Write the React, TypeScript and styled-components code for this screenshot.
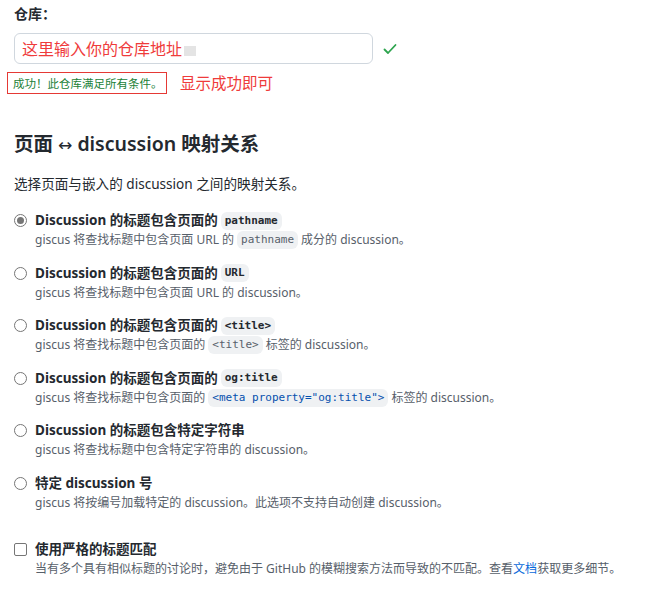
import React from "react";
import styled, { createGlobalStyle } from "styled-components";

const Global = createGlobalStyle`
  html, body { margin: 0; padding: 0; background: #fff; }
  body {
    font-family: "Noto Sans", "Noto Sans CJK SC", sans-serif;
    color: #24292f;
  }
  * { box-sizing: border-box; }
`;

const Page = styled.div`
  width: 651px;
  height: 593px;
  padding: 4px 14px 0 14px;
  overflow: hidden;
`;

const FieldLabel = styled.div`
  font-size: 14px;
  font-weight: 700;
  line-height: 20px;
  margin-bottom: 9px;
`;

const InputRow = styled.div`
  display: flex;
  align-items: center;
  gap: 10px;
`;

const InputBox = styled.div`
  width: 359px;
  height: 31px;
  border: 1px solid #d0d7de;
  border-radius: 6px;
  display: flex;
  align-items: center;
  padding-left: 7px;
`;

const Placeholder = styled.span`
  color: #ef3b3b;
  font-size: 16px;
  line-height: 20px;
`;

const Redact = styled.span`
  display: inline-block;
  width: 12px;
  height: 10px;
  background: #e4e4e4;
  margin-left: 2px;
  margin-top: 4px;
`;

const StatusRow = styled.div`
  display: flex;
  align-items: center;
  margin: 7px 0 0 -7px;
`;

const SuccessBox = styled.div`
  border: 1px solid #e53935;
  height: 22px;
  width: 160px;
  display: flex;
  align-items: center;
  padding-left: 5px;
  color: #1a7f37;
  font-size: 11.5px;
  white-space: nowrap;
  overflow: hidden;
`;

const Note = styled.span`
  color: #ef3b3b;
  font-size: 15.5px;
  margin-left: 13px;
`;

const Heading = styled.h2`
  margin: 36px 0 0 0;
  font-size: 19.5px;
  font-weight: 600;
  line-height: 28px;
`;

const Arrow = styled.span`
  font-weight: 400;
  font-family: "DejaVu Sans", sans-serif;
  font-size: 17px;
`;

const Intro = styled.p`
  margin: 16px 0 0 0;
  font-size: 13.6px;
  line-height: 18px;
`;

const OptionList = styled.div`
  display: flex;
  flex-direction: column;
  gap: 14.6px;
  margin-top: 18px;
`;

const Option = styled.label`
  display: grid;
  grid-template-columns: 21px 1fr;
  grid-template-rows: 19px 18px;
  row-gap: 1px;
`;

const Radio = styled.span<{ $checked?: boolean }>`
  width: 13px;
  height: 13px;
  border-radius: 50%;
  border: 1px solid #767676;
  margin-top: 3px;
  display: flex;
  align-items: center;
  justify-content: center;
  &::after {
    content: "";
    width: 7px;
    height: 7px;
    border-radius: 50%;
    background: ${(p) => (p.$checked ? "#767676" : "transparent")};
  }
`;

const Check = styled.span`
  width: 13px;
  height: 13px;
  border-radius: 2px;
  border: 1px solid #767676;
  margin-top: 3px;
`;

const Title = styled.div`
  font-size: 13.5px;
  font-weight: 700;
  line-height: 19px;
  display: flex;
  align-items: center;
  white-space: nowrap;
`;

const Desc = styled.div`
  grid-column: 2;
  font-size: 12px;
  line-height: 18px;
  height: 18px;
  color: #57606a;
  display: flex;
  align-items: center;
  white-space: nowrap;
`;

const Code = styled.code<{ $blue?: boolean }>`
  font-family: "DejaVu Sans Mono", "Liberation Mono", monospace;
  font-size: 11px;
  background: #eff1f3;
  border-radius: 6px;
  padding: 1px 4px;
  margin: 0 3px;
  color: ${(p) => (p.$blue ? "#0550ae" : "inherit")};
  line-height: 16px;
`;

const Link = styled.a`
  color: #0969da;
  text-decoration: none;
`;

const StrictBlock = styled.div`
  margin-top: 28px;
`;

export default function App() {
  return (
    <Page>
      <Global />
      <FieldLabel>仓库：</FieldLabel>
      <InputRow>
        <InputBox>
          <Placeholder>这里输入你的仓库地址</Placeholder>
          <Redact />
        </InputBox>
        <svg width="14" height="12" viewBox="0 0 14 12">
          <path d="M1.5 6.5 L5 10 L12.5 2" fill="none" stroke="#2da44e" strokeWidth="1.8" strokeLinecap="round" strokeLinejoin="round" />
        </svg>
      </InputRow>
      <StatusRow>
        <SuccessBox>成功！此仓库满足所有条件。</SuccessBox>
        <Note>显示成功即可</Note>
      </StatusRow>

      <Heading>页面 <Arrow>↔</Arrow> discussion 映射关系</Heading>
      <Intro>选择页面与嵌入的 discussion 之间的映射关系。</Intro>

      <OptionList>
        <Option>
          <Radio $checked />
          <Title>Discussion 的标题包含页面的 <Code>pathname</Code></Title>
          <Desc>giscus 将查找标题中包含页面 URL 的<Code>pathname</Code>成分的 discussion。</Desc>
        </Option>
        <Option>
          <Radio />
          <Title>Discussion 的标题包含页面的 <Code>URL</Code></Title>
          <Desc>giscus 将查找标题中包含页面 URL 的 discussion。</Desc>
        </Option>
        <Option>
          <Radio />
          <Title>Discussion 的标题包含页面的 <Code>&lt;title&gt;</Code></Title>
          <Desc>giscus 将查找标题中包含页面的<Code>&lt;title&gt;</Code>标签的 discussion。</Desc>
        </Option>
        <Option>
          <Radio />
          <Title>Discussion 的标题包含页面的 <Code>og:title</Code></Title>
          <Desc>giscus 将查找标题中包含页面的<Code $blue>&lt;meta property="og:title"&gt;</Code>标签的 discussion。</Desc>
        </Option>
        <Option>
          <Radio />
          <Title>Discussion 的标题包含特定字符串</Title>
          <Desc>giscus 将查找标题中包含特定字符串的 discussion。</Desc>
        </Option>
        <Option>
          <Radio />
          <Title>特定 discussion 号</Title>
          <Desc>giscus 将按编号加载特定的 discussion。此选项不支持自动创建 discussion。</Desc>
        </Option>
      </OptionList>

      <StrictBlock>
        <Option>
          <Check />
          <Title>使用严格的标题匹配</Title>
          <Desc>当有多个具有相似标题的讨论时，避免由于 GitHub 的模糊搜索方法而导致的不匹配。查看<Link>文档</Link>获取更多细节。</Desc>
        </Option>
      </StrictBlock>
    </Page>
  );
}
